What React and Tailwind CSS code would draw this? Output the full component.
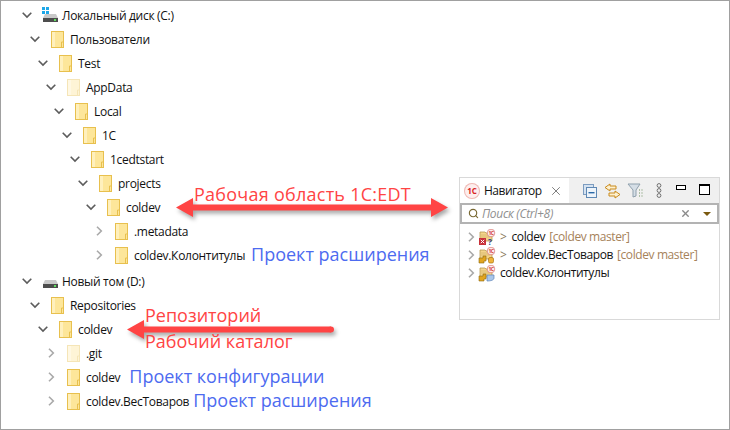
import { X, Search } from 'lucide-react'

const FONT = "font-['Open_Sans','Noto_Sans',sans-serif]"

function Chevron({ open, className = '' }) {
  return (
    <svg width="10" height="10" viewBox="0 0 10 10" className={className}>
      {open ? (
        <path d="M.7 2.800l4.300 4.300 4.300-4.300" fill="none" stroke="#5c5c5c" strokeWidth="1.6" />
      ) : (
        <path d="M3 .7l4.300 4.300-4.300 4.300" fill="none" stroke="#a9a9a9" strokeWidth="1.6" />
      )}
    </svg>
  )
}

function Folder({ pale }) {
  return (
    <svg width="13" height="17" viewBox="0 0 13 17" className={pale ? 'opacity-40' : ''}>
      <rect x="0.5" y="0.5" width="12" height="16" fill="#fde69a" stroke="#e8c04e" />
      <path d="M10.5 11v5.500M10.500 11h2" stroke="#e8c04e" fill="none" />
      <rect x="1" y="1" width="3" height="15" fill="#fff0bd" />
    </svg>
  )
}

function Drive({ win }) {
  return (
    <svg width="17" height="16" viewBox="0 0 17 16" className="-ml-px">
      {win && (
        <g fill="#1ea7e8">
          <rect x="0" y="0" width="3" height="3" />
          <rect x="4" y="0" width="3" height="3" />
          <rect x="0" y="4" width="3" height="3" />
          <rect x="4" y="4" width="3" height="3" />
        </g>
      )}
      <path d="M3 7h11l2 4H1z" fill="#c9c9c9" />
      <rect x="1" y="11" width="15" height="4" fill="#4d4d4d" />
      <rect x="12" y="12" width="2" height="2" fill="#5fe05f" />
    </svg>
  )
}

function TreeRow({ depth, open, icon, label, note, noteGap, pale, mt }) {
  return (
    <div className={`flex h-6 items-center ${mt || ''}`} style={{ paddingLeft: 23 + depth * 8 }}>
      <Chevron open={open} className="shrink-0" />
      <span className="ml-[11px] flex w-[19px] shrink-0 items-center">
        {icon || <Folder pale={pale} />}
      </span>
      <span className="pt-px text-[12px] leading-none tracking-[-0.3px] text-[#111]">{label}</span>
      {note && <span className={`${noteGap} -translate-y-px text-[18px] leading-none text-[#4d6bf0]`}>{note}</span>}
    </div>
  )
}

function ProjectIcon({ badge }) {
  return (
    <svg width="18" height="17" viewBox="0 0 18 17" className="shrink-0">
      <path d="M2 3h5l1 1h6v8H2z" fill="#f4d48a" stroke="#b79a52" strokeWidth="0.8" />
      <path d="M3 6h9M3 8h9" stroke="#c9ab66" strokeWidth="0.6" />
      <circle cx="13" cy="4" r="3.800" fill="#fdeeee" stroke="#d9736f" strokeWidth="0.7" />
      <text x="10.400" y="5.800" fontSize="5" fontWeight="700" fill="#d23a2e">1С</text>
      {badge === 'error' && (
        <g>
          <rect x="1" y="9" width="7" height="7" fill="#c8313a" />
          <path d="M2.800 10.800l3.400 3.400M6.200 10.800l-3.400 3.400" stroke="#fff" strokeWidth="1" />
          <text x="10" y="16" fontSize="8" fontWeight="700" fill="#27408b">?</text>
        </g>
      )}
      {badge === 'db' && (
        <g>
          <path d="M1 11h4v-2h3v5H6v2H1z" fill="#e2a51f" stroke="#8f6a12" strokeWidth="0.6" />
          <rect x="10.500" y="10.500" width="5" height="5.500" rx="1.500" fill="#f0b43a" stroke="#a87412" strokeWidth="0.7" />
        </g>
      )}
      {badge === 'ext' && (
        <g>
          <path d="M1 11h4v-2h3v5H6v2H1z" fill="#e2a51f" stroke="#8f6a12" strokeWidth="0.6" />
          <path d="M9 10h7v3c0 2-3 3-7 3z" fill="#a9c6ea" stroke="#5b82b8" strokeWidth="0.7" />
        </g>
      )}
    </svg>
  )
}

function NavRow({ prefix, name, branch, badge }) {
  return (
    <div className="flex h-[18px] items-center pl-[6px] text-[12px] leading-none tracking-[-0.4px]">
      <Chevron className="shrink-0" />
      <span className="ml-[2px] mr-[4px] flex"><ProjectIcon badge={badge} /></span>
      {prefix && <span className="mr-[5px] text-[#8a7a5c]">&gt;</span>}
      <span className="text-[#111]">{name}</span>
      {branch && <span className="ml-[4px] text-[#a6825a]">{branch}</span>}
    </div>
  )
}

function Navigator() {
  return (
    <div className="absolute left-[458px] top-[176px] flex h-[143px] w-[261px] flex-col border border-[#d9d9d9] bg-white">
      <div className="flex h-[25px] shrink-0">
        <div className="flex w-[109px] items-center bg-white pl-[4px]">
          <span className="flex h-[16px] w-[16px] items-center justify-center rounded-full bg-[#fdeeee] text-[8px] font-bold leading-none text-[#d8231f] ring-1 ring-inset ring-[#eeb9b4]">
            1С
          </span>
          <span className="ml-[4px] text-[12px] leading-none tracking-[-0.5px] text-[#111]">Навигатор</span>
          <X size={14} strokeWidth={1} className="ml-[7px] text-[#222]" />
        </div>
        <div className="flex flex-1 items-center bg-[#f0f0f0] pl-[14px]">
          <svg width="14" height="14" viewBox="0 0 14 14">
            <rect x="0.5" y="0.5" width="10" height="10" fill="#d5e2f0" stroke="#7c9cc0" />
            <rect x="3.500" y="3.500" width="10" height="10" fill="#eef4fa" stroke="#5f88b4" />
            <rect x="5.500" y="8" width="6" height="1.400" fill="#2b6aa8" />
          </svg>
          <svg width="17" height="16" viewBox="0 0 17 16" className="ml-[7px]">
            <path d="M6 1L1 4.500 6 8V6h6V3H6z" fill="#fdf0cf" stroke="#c98a1c" />
            <path d="M11 8l5 3.500-5 3.500v-2H5v-3h6z" fill="#fdf0cf" stroke="#c98a1c" />
          </svg>
          <svg width="17" height="15" viewBox="0 0 17 15" className="ml-[6px]">
            <path d="M1 1h12L9 7v6L6 14V7z" fill="#d5dee6" stroke="#8fa0ad" />
            <path d="M12 7h1m1.500 0h1M12 10h1m1.500 0h1M12 13h1m1.500 0h1" stroke="#6d8f5f" />
          </svg>
          <svg width="6" height="15" viewBox="0 0 6 15" className="ml-[12px]">
            <circle cx="3" cy="2.500" r="1.900" fill="none" stroke="#6f6f6f" />
            <circle cx="3" cy="7.500" r="1.900" fill="none" stroke="#6f6f6f" />
            <circle cx="3" cy="12.500" r="1.900" fill="none" stroke="#6f6f6f" />
          </svg>
          <span className="ml-[14px] h-[5px] w-[10px] -translate-y-[3px] border border-black bg-white" />
          <span className="ml-[13px] h-[11px] w-[11px] -translate-y-[1px] border border-t-2 border-black bg-white" />
        </div>
      </div>
      <div className="flex h-[21px] shrink-0 items-center border-2 border-[#b3b3b3] bg-white pl-[6px] pr-[6px]">
        <Search size={11} strokeWidth={2.5} className="text-[#7a6a34]" />
        <span className="ml-[3px] flex-1 text-[12px] italic leading-none tracking-[-0.3px] text-[#8f8f8f]">Поиск (Ctrl+8)</span>
        <X size={11} strokeWidth={3} className="text-[#8a8a8a]" />
        <span className="ml-[12px] h-0 w-0 border-x-[4px] border-t-[4px] border-x-transparent border-t-[#7a5a10]" />
      </div>
      <div className="pt-[4px]">
        <NavRow prefix name="coldev" branch="[coldev master]" badge="error" />
        <NavRow prefix name="coldev.ВесТоваров" branch="[coldev master]" badge="db" />
        <NavRow name="coldev.Колонтитулы" badge="ext" />
      </div>
    </div>
  )
}

function Arrow({ left, top, width, both }) {
  // наконечник 17px, полка 6px, высота 19
  const w = width
  const points = both
    ? `0,9.500 17,0 17,6.500 ${w - 17},6.500 ${w - 17},0 ${w},9.500 ${w - 17},19 ${w - 17},12.500 17,12.500 17,19`
    : `0,9.500 17,0 17,6.500 ${w - 3},6.500 ${w - 3},12.500 17,12.500 17,19`
  return (
    <svg
      width={w + 6}
      height="25"
      viewBox={`0 0 ${w + 6} 25`}
      className="absolute drop-shadow-[2px_3px_2px_rgba(0,0,0,0.35)]"
      style={{ left, top }}
    >
      <polygon points={points} fill="#ff4444" />
      {!both && <circle cx={w - 3} cy="9.500" r="3" fill="#ff4444" />}
    </svg>
  )
}

export default function App() {
  return (
    <div className={`relative h-[430px] w-[730px] overflow-hidden border border-[#a0a0a0] bg-white ${FONT}`}>
      <div className="-ml-[2px] pt-[2px]">
        <TreeRow depth={0} open icon={<Drive win />} label="Локальный диск (C:)" />
        <TreeRow depth={1} open label="Пользователи" />
        <TreeRow depth={2} open label="Test" />
        <TreeRow depth={3} open pale label="AppData" />
        <TreeRow depth={4} open label="Local" />
        <TreeRow depth={5} open label="1C" />
        <TreeRow depth={6} open label="1cedtstart" />
        <TreeRow depth={7} open label="projects" />
        <TreeRow depth={8} open label="coldev" />
        <TreeRow depth={9} label=".metadata" />
        <TreeRow depth={9} label="coldev.Колонтитулы" note="Проект расширения" noteGap="ml-[6px]" />
        <TreeRow depth={0} open mt="mt-[2px]" icon={<Drive />} label="Новый том (D:)" />
        <TreeRow depth={1} open label="Repositories" />
        <TreeRow depth={2} open label="coldev" />
        <TreeRow depth={3} pale label=".git" />
        <TreeRow depth={3} label="coldev" note="Проект конфигурации" noteGap="ml-[9px]" />
        <TreeRow depth={3} label="coldev.ВесТоваров" note="Проект расширения" noteGap="ml-[4px]" />
      </div>

      <Navigator />

      <Arrow left={175} top={197} width={272} both />
      <Arrow left={126} top={319} width={207} />
      <span className="absolute left-[193px] top-[184px] text-[18px] leading-none tracking-[0.25px] text-[#ff4444]">Рабочая область 1C:EDT</span>
      <span className="absolute left-[144px] top-[305px] text-[18px] leading-none text-[#ff4444]">Репозиторий</span>
      <span className="absolute left-[144px] top-[331px] text-[18px] leading-none text-[#ff4444]">Рабочий каталог</span>
    </div>
  )
}
